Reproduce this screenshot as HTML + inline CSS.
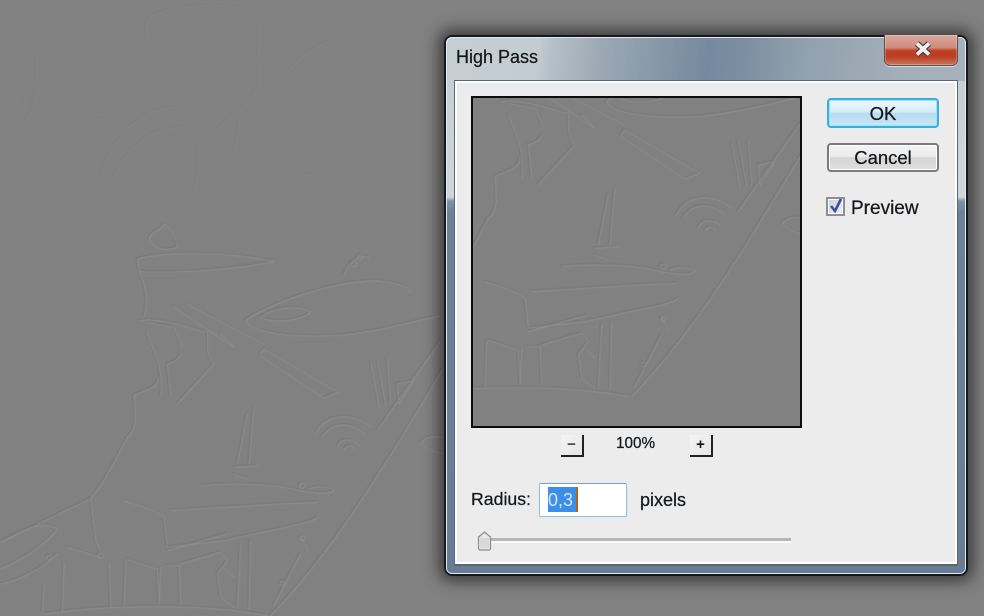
<!DOCTYPE html>
<html><head><meta charset="utf-8"><style>
html,body{margin:0;padding:0;width:984px;height:616px;overflow:hidden;background:#818181}
body{position:relative;font-family:"Liberation Sans",sans-serif;color:#14181c}
.a{position:absolute}
.t{position:absolute;white-space:nowrap;line-height:1;-webkit-text-stroke:.25px #14181c;filter:blur(.35px)}
svg{position:absolute;display:block}
.btn{position:absolute;box-sizing:border-box;border-radius:4px}
.btn span{position:absolute;left:0;right:0;text-align:center;font-size:18.500px;line-height:1;-webkit-text-stroke:.25px #14181c;filter:blur(.35px)}
.stp{position:absolute;width:23px;height:22px;box-sizing:border-box;border-right:2px solid #222;border-bottom:2px solid #222;background:linear-gradient(135deg,#f4f4f4,#e6e6e6);text-align:center;font-weight:bold;font-size:15px;line-height:20px;filter:blur(.3px)}
</style></head><body>
<svg width="984" height="616" viewBox="0 0 984 616" style="left:0;top:0;filter:blur(.6px)">
<defs>
<g id="low" transform="translate(0,200) scale(.3333)" fill="none" stroke-linecap="round" stroke-linejoin="round">
<path d="M410 175C500 150 700 155 820 182C720 205 520 220 415 212ZM445 118C450 90 480 95 490 70C510 85 530 120 530 140C500 150 470 150 445 118M415 215C440 260 440 320 430 350"/>
<path d="M735 360C800 310 1000 240 1130 240C1190 245 1230 260 1225 275M735 360C760 400 880 410 1000 405C1100 400 1230 365 1320 345M780 350C820 320 900 310 930 335C900 360 820 370 780 350M1030 225C1040 190 1070 160 1105 170"/>
<path d="M520 318L700 440M560 310L790 430M790 445L1015 575M780 465L970 592M790 445Q775 460 780 465M1015 575L970 592M660 400L700 440"/>
<path d="M420 360C480 350 560 380 620 395C625 430 610 460 640 490M440 400C460 460 490 500 480 590M500 490L510 590M540 460C540 480 500 490 500 490M640 490L530 610M440 365L520 380L545 440"/>
<path d="M475 530C470 570 420 570 400 585C405 640 410 690 380 710C360 750 340 790 320 820C300 860 280 880 270 895C180 935 80 990 0 1025M270 895L285 1020L300 1060M200 1040L300 1070"/>
<path d="M1110 485L1135 620M1130 480L1155 615M1160 475L1170 610M1190 550L1240 540L1195 610Z"/>
<path d="M945 700C970 640 1060 630 1110 680M965 710C990 665 1050 660 1090 700M1010 740C1020 710 1060 710 1075 735M1030 750C1040 730 1055 735 1060 745"/>
<path d="M810 1245C1000 1050 1150 800 1330 500M1130 690L1320 420M820 1215L900 1060M1262 725C1280 705 1310 705 1330 710M1262 725C1280 745 1310 755 1330 758"/>
<path d="M700 800L770 795M700 820L740 835M710 790L740 640M745 790L760 620M600 855C700 845 830 850 900 870C950 880 990 880 1000 870C985 855 950 855 925 865M370 900C420 915 470 930 490 950L500 1040L670 1020L900 970C930 960 940 960 950 950M500 1050L680 1000M510 930C600 925 800 910 950 905"/>
<path d="M500 1095L535 1095L540 1210M480 1100L475 1210M540 1090L660 1055L680 1080L650 1120L660 1190L700 1220M380 1075L470 1105L475 1210M325 1085L330 1220M375 1080L370 1220M720 1030L710 1220M750 1020L745 1225M670 1100L700 1130"/>
<path d="M130 1240C300 1215 600 1205 800 1245M0 1105C60 1080 140 1030 170 985C130 960 80 980 0 1025M0 1150C60 1140 130 1100 170 1060M130 1150L125 1240M190 1090L185 1240M900 1010L920 1050"/>
<circle cx="905" cy="855" r="8"/><circle cx="145" cy="1070" r="6"/><circle cx="300" cy="1065" r="8"/><circle cx="845" cy="1148" r="6"/><circle cx="905" cy="1012" r="7"/><circle cx="1060" cy="190" r="8"/><circle cx="1078" cy="170" r="7"/>
</g>
<g id="hi" transform="scale(.3333)" fill="none" stroke-linecap="round" stroke-linejoin="round">
<path d="M440 60C430 100 440 180 500 235C530 260 560 300 590 310M440 60C460 20 700 -10 760 40C780 80 775 120 770 175C785 200 770 220 775 240C770 280 740 310 720 325L640 395"/>
<path d="M650 105C680 110 700 105 715 95M500 125C510 170 530 200 560 205M240 170C320 200 420 220 465 285M380 195L465 280M180 330L375 345M300 520C340 410 420 310 560 320C600 400 600 500 580 580M340 530C380 440 450 380 550 380M720 330L705 450M640 390L710 440"/>
<path d="M15 205L75 265L70 325L15 280M110 140L105 300M75 370L110 300M1260 5C1280 40 1290 80 1310 110M870 205C900 170 950 130 1000 120M905 520L960 525L935 480Z"/>
</g>
</defs>
<rect width="984" height="616" fill="#818181"/>
<g stroke="#6f6f6f" stroke-width="2.500" transform="translate(-.6,-.6)" opacity=".7"><use href="#low"/></g>
<g stroke="#9a9a9a" stroke-width="2.500" transform="translate(.7,.7)" opacity=".7"><use href="#low"/></g>
<g stroke="#767676" stroke-width="2.500" transform="translate(-.5,-.5)" opacity=".4"><use href="#hi"/></g>
<g stroke="#8f8f8f" stroke-width="2.500" transform="translate(.5,.5)" opacity=".4"><use href="#hi"/></g>
</svg>

<!-- window -->
<div class="a" style="left:444px;top:35px;width:524px;height:541px;box-sizing:border-box;border:2px solid #15191d;border-radius:8px;box-shadow:0 0 14px 6px rgba(0,0,0,.5);overflow:hidden;background:linear-gradient(180deg,#c3ccd3 0,#cfd7dd 160px,#7f92a7 164px,#6d8299 175px,#687d95 100%)">
  <div class="a" style="left:0;top:0;right:0;height:44px;background:linear-gradient(96deg,#c6ced5 0,#c4ccd3 92px,#b6c0c9 106px,#9ca9b4 155px,#8294a6 225px,#768a9f 262px,#7a8da1 292px,#92a1ae 360px,#a2aeb8 450px,#a6b1bb 522px)"></div>
  <div class="a" style="left:0;top:0;right:0;bottom:0;box-sizing:border-box;border:1px solid #e4e9ed;border-radius:6px"></div>
</div>
<div class="t" style="left:456px;top:48px;font-size:18px">High Pass</div>

<!-- close -->
<div class="a" style="left:884px;top:35px;width:74px;height:31px;box-sizing:border-box;border:1px solid #5f4f4d;border-top:0;border-radius:0 0 6px 6px;background:linear-gradient(180deg,#d8a79d 0,#cf8c7e 42%,#bf3f22 52%,#bb3d20 72%,#c57865 100%);box-shadow:inset 0 0 0 1px rgba(255,255,255,.25),0 1px 0 rgba(235,240,245,.7)"></div>
<svg style="left:913px;top:41px;filter:blur(.3px)" width="20" height="16" viewBox="0 0 20 16"><path d="M4 2.500L16 13.500M16 2.500L4 13.500" stroke="#4d3a38" stroke-width="6" fill="none"/><path d="M4 2.500L16 13.500M16 2.500L4 13.500" stroke="#f2f2f2" stroke-width="3.800" fill="none"/></svg>

<!-- client -->
<div class="a" style="left:454px;top:80px;width:504px;height:486px;box-sizing:border-box;border:1px solid #5a6670;border-bottom-width:2px;background:#ececec;box-shadow:inset 0 0 0 2px #fff"></div>

<!-- preview -->
<div class="a" style="left:471px;top:96px;width:331px;height:332px;box-sizing:border-box;border:2px solid #0d0d0d;background:#818181;overflow:hidden">
<svg width="327" height="328" viewBox="0 0 327 328" style="left:0;top:0;filter:blur(.6px)">
<g transform="translate(-112,-317)">
<g stroke="#6f6f6f" stroke-width="2.500" transform="translate(-.6,-.6)" opacity=".7"><use href="#low"/></g>
<g stroke="#9a9a9a" stroke-width="2.500" transform="translate(.7,.7)" opacity=".7"><use href="#low"/></g>
</g>
</svg>
</div>

<!-- buttons -->
<div class="btn" style="left:827px;top:98px;width:112px;height:30px;border:2px solid #38aedb;background:linear-gradient(180deg,#eef8fd 0,#d5edf9 45%,#b8dcef 52%,#c8e6f5 100%);box-shadow:inset 0 0 0 1px #a5e3f7"><span style="top:4.500px">OK</span></div>
<div class="btn" style="left:827px;top:143px;width:112px;height:29px;border:2px solid #7b7b7b;background:linear-gradient(180deg,#f4f4f4 0,#ececec 45%,#d5d5d5 52%,#dedede 100%);box-shadow:inset 0 0 0 1px #fff"><span style="top:4px">Cancel</span></div>

<!-- checkbox -->
<div class="a" style="left:826px;top:197px;width:19px;height:19px;box-sizing:border-box;border:2px solid #8f8f8f;background:linear-gradient(135deg,#c9cfe0,#eef0f6);box-shadow:inset 0 0 0 1px #fff"></div>
<svg style="left:826px;top:195px" width="20" height="20" viewBox="0 0 20 20"><path d="M5 11L9 16L15 4" stroke="#3d4f9a" stroke-width="2.600" fill="none"/></svg>
<div class="t" style="left:851px;top:199px;font-size:19px">Preview</div>

<!-- zoom -->
<div class="stp" style="left:561px;top:435px;color:#444">−</div>
<div class="t" style="left:616px;top:436px;font-size:15.300px">100%</div>
<div class="stp" style="left:690px;top:435px">+</div>

<!-- radius -->
<div class="t" style="left:471px;top:491px;font-size:17.700px">Radius:</div>
<div class="a" style="left:539px;top:483px;width:88px;height:34px;box-sizing:border-box;border:1px solid #9dbdd6;border-top-color:#7fa3bf;border-radius:2px;background:#fff;box-shadow:0 0 0 1px #dfe9f0"></div>
<div class="a" style="left:548px;top:487px;width:29px;height:25px;background:#3c8ee6"></div>
<div class="a" style="left:576px;top:487px;width:1.500px;height:25px;background:#b5621d"></div>
<div class="t" style="left:548px;top:491px;font-size:18px;color:#d6e6f8;-webkit-text-stroke:0">0,3</div>
<div class="t" style="left:640px;top:491px;font-size:18px">pixels</div>

<!-- slider -->
<div class="a" style="left:480px;top:538px;width:311px;height:3px;background:#b6b6b6;box-shadow:0 2px 0 #f8f8f8"></div>
<svg style="left:477px;top:531px" width="15" height="20" viewBox="0 0 15 20"><path d="M1.500 6L7.500 1L13.500 6V17Q13.500 19 11.500 19H3.500Q1.500 19 1.500 17Z" fill="#e6e6e6" stroke="#8d8d8d" stroke-width="1.200"/><path d="M3 7H12V17H3Z" fill="#d8d8d8"/></svg>
</body></html>
